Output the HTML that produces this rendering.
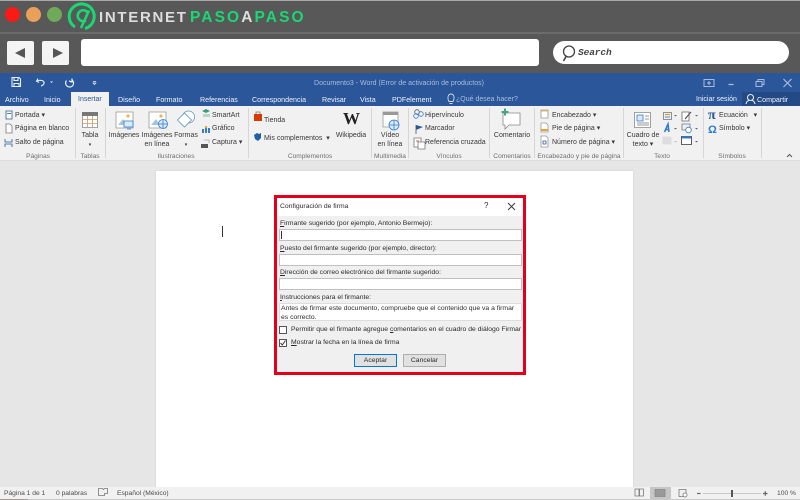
<!DOCTYPE html>
<html lang="es"><head><meta charset="utf-8"><title>Word</title>
<style>
html,body{margin:0;padding:0;background:#fff}
#p{position:relative;width:800px;height:500px;overflow:hidden;font-family:"Liberation Sans",sans-serif;background:#e6e6e6;filter:blur(.3px)}
.a{position:absolute}
.t{position:absolute;white-space:nowrap;font-size:7px;line-height:10px;color:#383838;margin-top:.8px}
.c{transform:translateX(-50%);text-align:center}
.w{color:#eef2f9;font-size:7.100px}
.g{color:#6e6e6e;font-size:6.600px}
.d{color:#2a2a2a;font-size:6.800px}
.s{color:#4c4c4c;font-size:6.700px}
.i{position:absolute;background:#fff;border:1px solid #c0c0c0;box-sizing:border-box}
u{text-decoration:underline}
</style></head><body><div id="p">
<div class="a" style="left:0;top:0;width:800px;height:73px;background:#585858"></div>
<div class="a" style="left:0;top:0;width:800px;height:1px;background:#aaa"></div>
<div class="a" style="left:0;top:32px;width:800px;height:2px;background:#6b6b6b"></div>
<div class="a" style="left:5px;top:7px;width:15px;height:15px;border-radius:50%;background:#fb1a14"></div>
<div class="a" style="left:26px;top:7px;width:15px;height:15px;border-radius:50%;background:#e9a058"></div>
<div class="a" style="left:47px;top:7px;width:15px;height:15px;border-radius:50%;background:#6fa95a"></div>
<svg class="a" style="left:67px;top:1px" width="30" height="30" viewBox="0 0 30 30" fill="none" stroke="#19d873"><path d="M8 26A12.500 12.500 0 1 1 18 27.500" stroke-width="3"/><path d="M14 27L22 9.500M21 12A5.500 5.500 0 1 0 19 19.500" stroke-width="2.600"/></svg>
<div class="t" style="left:99px;top:8px;font-size:15px;font-weight:bold;line-height:18px;color:#dedede;letter-spacing:1.700px">INTERNET</div>
<div class="t" style="left:190px;top:8px;font-size:15.500px;font-weight:bold;line-height:18px;color:#19d873;letter-spacing:2.100px">PASO<span style="color:#dedede">A</span>PASO</div>
<div class="a" style="left:7px;top:41px;width:27px;height:24px;background:#f4f4f4;border-radius:2px"></div>
<div class="a" style="left:42px;top:41px;width:27px;height:24px;background:#f4f4f4;border-radius:2px"></div>
<svg class="a" style="left:0;top:40px" width="80" height="26"><path d="M15 13L25 8V18Z M63 13L53 8V18Z" fill="#555"/></svg>
<div class="a" style="left:81px;top:39px;width:458px;height:27px;background:#fff;border-radius:3px"></div>
<div class="a" style="left:553px;top:41px;width:236px;height:23px;background:#fff;border-radius:12px"></div>
<svg class="a" style="left:560px;top:44px" width="20" height="20" fill="none" stroke="#444" stroke-width="1.300"><circle cx="9" cy="7.500" r="5.500"/><path d="M6 12.500L3.500 17" stroke-width="1.600"/></svg>
<div class="t" style="left:578px;top:46px;font:italic bold 9.500px/12px 'Liberation Mono',monospace;color:#444;letter-spacing:-.1px">Search</div>

<div class="a" style="left:0;top:73px;width:800px;height:33px;background:#2b579a"></div>
<svg class="a" style="left:0;top:73px" width="110" height="18" fill="none" stroke="#e8eef7" stroke-width="1.100"><path d="M12 4.500h7l1.500 1.500v7.500h-8.500z M14 4.500v3h4v-3 M14 13.500v-3h5v3"/><path d="M38 5.500L36.500 8L39 9.500 M37 8c3-1.500 8-.5 7 2.500-.5 1-1 2-3 2.500"/><path d="M50 8.500h3l-1.500 1.500z" fill="#e8eef7" stroke="none"/><path d="M72 5.500L72 9L69 8 M71.500 6.500a4 4 0 1 1-5 1" stroke-width="1.200"/><path d="M93 8.500h3 M93 10h3l-1.500 1.500z" stroke-width=".7"/></svg>
<div class="t c" style="left:399px;top:78px;color:#a7bcdc">Documento3 - Word (Error de activación de productos)</div>
<svg class="a" style="left:700px;top:75px" width="100" height="16" fill="none" stroke="#a7bcdc"><path d="M4 4.500h10v7H4z M7 8h4 M9 6v4" /><path d="M28.500 9.500h5" stroke-width="1.300"/><path d="M56 6.500h6v5h-6z M58 6.500v-2h6v5h-2"/><path d="M83.500 4l8 8M91.500 4l-8 8" stroke-width="1.200"/></svg>
<div class="a" style="left:71px;top:92px;width:38px;height:15px;background:#f1f1f1"></div>
<div class="t w" style="left:5px;top:94px">Archivo</div>
<div class="t w" style="left:44px;top:94px">Inicio</div>
<div class="t" style="left:78px;top:94px;color:#2b579a">Insertar</div>
<div class="t w" style="left:118px;top:94px">Diseño</div>
<div class="t w" style="left:156px;top:94px">Formato</div>
<div class="t w" style="left:200px;top:94px">Referencias</div>
<div class="t w" style="left:252px;top:94px">Correspondencia</div>
<div class="t w" style="left:322px;top:94px">Revisar</div>
<div class="t w" style="left:360px;top:94px">Vista</div>
<div class="t w" style="left:392px;top:94px">PDFelement</div>
<svg class="a" style="left:446px;top:92px" width="10" height="14" fill="none" stroke="#cfdaea" stroke-width=".9"><path d="M3 9.500C1 6 2 2 5 2s4 4 2 7.500z M3.500 11.500h3"/></svg>
<div class="t" style="left:456px;top:94px;color:#a7bcdc;font-size:7px">¿Qué desea hacer?</div>
<div class="t w" style="left:696px;top:94px;font-size:7px">Iniciar sesión</div>
<div class="a" style="left:742px;top:92px;width:58px;height:14px;background:#234a85"></div>
<svg class="a" style="left:745px;top:93px" width="12" height="13" fill="none" stroke="#e8eef7" stroke-width="1.100"><circle cx="5.500" cy="4.500" r="3"/><path d="M1 11c.5-3 2.500-3.500 3-3.500M10 11c-.5-3-2.500-3.500-3-3.500"/></svg>
<div class="t w" style="left:757px;top:94px">Compartir</div>

<div class="a" style="left:0;top:106px;width:800px;height:54px;background:#f1f1f1"></div>
<div class="a" style="left:0;top:160px;width:800px;height:1px;background:#dcdcdc"></div>
<div class="a" style="left:75px;top:108px;width:1px;height:50px;background:#d6d6d6"></div>
<div class="a" style="left:105px;top:108px;width:1px;height:50px;background:#d6d6d6"></div>
<div class="a" style="left:248px;top:108px;width:1px;height:50px;background:#d6d6d6"></div>
<div class="a" style="left:371px;top:108px;width:1px;height:50px;background:#d6d6d6"></div>
<div class="a" style="left:408px;top:108px;width:1px;height:50px;background:#d6d6d6"></div>
<div class="a" style="left:489px;top:108px;width:1px;height:50px;background:#d6d6d6"></div>
<div class="a" style="left:534px;top:108px;width:1px;height:50px;background:#d6d6d6"></div>
<div class="a" style="left:623px;top:108px;width:1px;height:50px;background:#d6d6d6"></div>
<div class="a" style="left:703px;top:108px;width:1px;height:50px;background:#d6d6d6"></div>
<div class="a" style="left:761px;top:108px;width:1px;height:50px;background:#d6d6d6"></div>

<svg class="a" style="left:0;top:106px" width="800" height="54" fill="none" stroke="#777" stroke-width=".8">
<path d="M6 5h6v8H6z" fill="#fff" stroke="#2b579a"/><path d="M7 7.500h4" stroke="#2b579a"/>
<path d="M6 18h4l2 2v7H6z" fill="#fff"/>
<path d="M5 33v3h7v-3M5 41v-3h7v3" stroke="#2b579a"/>
<path d="M82.500 6.500h15v15h-15z" fill="#fff" stroke="#888"/><path d="M82 6h16v4H82z" fill="#777" stroke="none"/><path d="M82 13.500h16M82 17.500h16M87.500 10v11M92.500 10v11" stroke="#c89a6a"/>
<path d="M116 6h17v16h-17z" fill="#fff" stroke="#999"/><path d="M118 19l5-6 4 6z" fill="#a7c4dc" stroke="none"/><circle cx="128" cy="10" r="1.600" fill="#eeb54a" stroke="none"/><path d="M124 15h9v6h-9z M127 23h4" fill="#dceaf6" stroke="#2b7cd3"/>
<path d="M149 6h17v16h-17z" fill="#fff" stroke="#999"/><path d="M151 19l5-6 4 6z" fill="#a7c4dc" stroke="none"/><circle cx="161" cy="10" r="1.600" fill="#eeb54a" stroke="none"/><circle cx="163" cy="18" r="4.500" fill="#dceaf6" stroke="#2b7cd3"/><path d="M158.500 18h9M163 13.500v9" stroke="#2b7cd3"/>
<circle cx="188.500" cy="11" r="6" fill="#fff" stroke="#5f93c8"/><path d="M177.500 14l7-7 7 7-7 7z" fill="#fff" stroke="#5f93c8"/>
<path d="M202 5l4-2 4 2-4 2z" fill="#3a9a7a" stroke="none"/><path d="M203 8h7v3h-7z" fill="#b7d6c8" stroke="none"/>
<path d="M202 27h2v-4h-2zM205 27h2v-7h-2zM208 27h2v-5h-2z" fill="#3a7cc8" stroke="none"/><path d="M205 20h2v2h-2z" fill="#e8a030" stroke="none"/>
<path d="M201 38h7v4h-7z" fill="#555" stroke="none"/><path d="M204 34h5v3" stroke="#aaa"/>
<path d="M254 8h8v7h-8z" fill="#d83b01" stroke="none"/><path d="M256 8v-2h4v2"/>
<path d="M254 29l3-2 2 1 2-1v5l-3 3-3-2z" fill="#1f5fa8" stroke="none"/>
<path d="M383 6h15v15h-15z" fill="#fff" stroke="#999"/><path d="M383 6h15v3h-15z" fill="#999" stroke="none"/><circle cx="394" cy="19" r="5" fill="#dceaf6" stroke="#2b7cd3"/><path d="M389 19h10M394 14v10" stroke="#2b7cd3"/>
<circle cx="417" cy="6" r="2.300" stroke="#555"/><circle cx="416" cy="10" r="2.300" stroke="#3a7cc8"/><circle cx="421" cy="8" r="2.300" stroke="#3a7cc8"/>
<path d="M416 19v9" stroke="#555"/><path d="M416 19l7 2-7 3z" fill="#2b579a" stroke="none"/>
<path d="M414 32h7v9h-7z" fill="#fff"/><path d="M418 36h7v7h-7z" fill="#fff"/><path d="M416 35h3" stroke="#d83b01"/>
<path d="M503 7h17v12h-11l-4 4v-4h-2z" fill="#fff" stroke="#888"/><path d="M501.500 6h7M505 2.500v7" stroke="#3fa886" stroke-width="2"/>
<path d="M541 4h7v8h-7z" fill="#fff" stroke="#999"/><path d="M541 5h7" stroke="#e8a030"/>
<path d="M541 17h5l2 2v7h-7z" fill="#fff" stroke="#999"/><path d="M541 24h7" stroke="#e8a030" stroke-width="2"/>
<path d="M541 30h5l2 2v9h-7z" fill="#fff" stroke="#999"/><path d="M543 35h3v3h-3z" stroke="#2b579a"/>
<path d="M634.500 6.500h16v15h-16z" fill="#fff" stroke="#888"/><path d="M637 9h6v6h-6z" fill="#dceaf6" stroke="#2b7cd3"/><path d="M645 10h4M645 13h4M637 17h12M637 19h12"/>
<path d="M663.500 6.500h8v7h-8z" fill="#eee" stroke="#777"/><path d="M665 8.500h5" stroke="#e8a030" stroke-width="1.200"/><path d="M665 11h5" stroke="#2b7cd3"/>
<path d="M682 6h7v9h-7z" fill="#fff" stroke="#666"/><path d="M685 13l6-7" stroke="#555" stroke-width="1.200"/>
<path d="M664.500 26l3.500-8 1 8M666 23.500h3" stroke="#2b79d0" stroke-width="1.500"/>
<path d="M682 18h8v6h-8z" fill="#eee"/><circle cx="688.500" cy="24" r="2.800" fill="#fff" stroke="#2b79d0"/>
<path d="M663 31h8v7h-8z" fill="#ddd" stroke="#ddd"/>
<path d="M681.500 30.500h10v8h-10z" fill="#fff" stroke="#333"/><path d="M682 31.500h9" stroke="#2b7cd3" stroke-width="2"/>
</svg>
<svg class="a" style="left:0;top:106px" width="800" height="54"><path d="M674 9h3l-1.500 1.500zM695 9h3l-1.500 1.500zM674 22h3l-1.500 1.500zM695 22h3l-1.500 1.500zM695 35h3l-1.500 1.500z" fill="#666"/><path d="M674 35h3l-1.500 1.500z" fill="#bbb"/></svg>
<div class="t" style="left:708px;top:108px;font:bold 14px/14px 'Liberation Serif',serif;color:#2b579a">π</div>
<div class="t" style="left:708px;top:122px;font:bold 11px/14px 'Liberation Sans',sans-serif;color:#2b7cd3">Ω</div>
<div class="t" style="left:343px;top:109px;font:bold 17px/18px 'Liberation Serif',serif;color:#222">W</div>

<div class="t" style="left:15px;top:110px">Portada ▾</div>
<div class="t" style="left:15px;top:123.500px">Página en blanco</div>
<div class="t" style="left:15px;top:137px">Salto de página</div>
<div class="t g c" style="left:38px;top:151px">Páginas</div>
<div class="t c" style="left:90px;top:130px">Tabla</div>
<div class="t c" style="left:90px;top:139px;font-size:5px">▾</div>
<div class="t g c" style="left:90px;top:151px">Tablas</div>
<div class="t c" style="left:124px;top:130px">Imágenes</div>
<div class="t c" style="left:157px;top:130px">Imágenes</div>
<div class="t c" style="left:157px;top:139.500px">en línea</div>
<div class="t c" style="left:186px;top:130px">Formas</div>
<div class="t c" style="left:186px;top:139px;font-size:5px">▾</div>
<div class="t" style="left:212px;top:110px">SmartArt</div>
<div class="t" style="left:212px;top:123.500px">Gráfico</div>
<div class="t" style="left:212px;top:137px">Captura ▾</div>
<div class="t g c" style="left:176px;top:151px">Ilustraciones</div>
<div class="t" style="left:264px;top:115px">Tienda</div>
<div class="t" style="left:264px;top:133px">Mis complementos &nbsp;▾</div>
<div class="t c" style="left:351px;top:130px">Wikipedia</div>
<div class="t g c" style="left:310px;top:151px">Complementos</div>
<div class="t c" style="left:390px;top:130px">Vídeo</div>
<div class="t c" style="left:390px;top:139.500px">en línea</div>
<div class="t g c" style="left:390px;top:151px">Multimedia</div>
<div class="t" style="left:425px;top:110px">Hipervínculo</div>
<div class="t" style="left:425px;top:123.500px">Marcador</div>
<div class="t" style="left:425px;top:137px">Referencia cruzada</div>
<div class="t g c" style="left:449px;top:151px">Vínculos</div>
<div class="t c" style="left:512px;top:130px">Comentario</div>
<div class="t g c" style="left:512px;top:151px">Comentarios</div>
<div class="t" style="left:552px;top:110px">Encabezado ▾</div>
<div class="t" style="left:552px;top:123.500px">Pie de página ▾</div>
<div class="t" style="left:552px;top:137px">Número de página ▾</div>
<div class="t g c" style="left:579px;top:151px">Encabezado y pie de página</div>
<div class="t c" style="left:643px;top:130px">Cuadro de</div>
<div class="t c" style="left:643px;top:139.500px">texto ▾</div>
<div class="t g c" style="left:662px;top:151px">Texto</div>
<div class="t" style="left:719px;top:110px">Ecuación &nbsp;&nbsp;▾</div>
<div class="t" style="left:719px;top:123.500px">Símbolo ▾</div>
<div class="t g c" style="left:732px;top:151px">Símbolos</div>
<svg class="a" style="left:785px;top:153px" width="10" height="6" fill="none" stroke="#555"><path d="M2 4l2.500-2.500L7 4"/></svg>

<div class="a" style="left:156px;top:171px;width:477px;height:316px;background:#fff;box-shadow:0 0 1px #bbb"></div>
<div class="a" style="left:222px;top:226px;width:1px;height:11px;background:#333"></div>

<div class="a" style="left:274px;top:195px;width:252px;height:180px;box-sizing:border-box;border:3px solid #e3001b;background:#f0f0f0"></div>
<div class="a" style="left:277px;top:198px;width:246px;height:18px;background:#fff"></div>
<div class="t d" style="left:280px;top:201px">Configuración de firma</div>
<div class="t d" style="left:484px;top:200.500px;font-size:8px">?</div>
<svg class="a" style="left:507px;top:201.500px" width="10" height="10" fill="none" stroke="#333" stroke-width=".9"><path d="M1 1l7 7M8 1l-7 7"/></svg>
<div class="t d" style="left:280px;top:218px"><u>F</u>irmante sugerido (por ejemplo, Antonio Bermejo):</div>
<div class="i" style="left:279px;top:229px;width:243px;height:12px"></div>
<div class="a" style="left:281px;top:231px;width:1px;height:8px;background:#333"></div>
<div class="t d" style="left:280px;top:243px"><u>P</u>uesto del firmante sugerido (por ejemplo, director):</div>
<div class="i" style="left:279px;top:254px;width:243px;height:12px"></div>
<div class="t d" style="left:280px;top:267.500px"><u>D</u>irección de correo electrónico del firmante sugerido:</div>
<div class="i" style="left:279px;top:278px;width:243px;height:12px"></div>
<div class="t d" style="left:280px;top:292px"><u>I</u>nstrucciones para el firmante:</div>
<div class="i" style="left:279px;top:303px;width:243px;height:18px;border-color:#ddd"></div>
<div class="t d" style="left:281px;top:303px;line-height:9px">Antes de firmar este documento, compruebe que el contenido que va a firmar<br>es correcto.</div>
<div class="i" style="left:279px;top:326px;width:7.500px;height:7.500px;border-color:#555"></div>
<div class="t d" style="left:291px;top:324.500px">Permitir que el firmante agregue <u>c</u>omentarios en el cuadro de diálogo Firmar</div>
<div class="i" style="left:279px;top:339px;width:7.500px;height:7.500px;border-color:#555"></div>
<svg class="a" style="left:279px;top:339px" width="8" height="8" fill="none" stroke="#333"><path d="M1.500 4l1.800 2L6.500 1.500"/></svg>
<div class="t d" style="left:291px;top:337px"><u>M</u>ostrar la fecha en la línea de firma</div>
<div class="a" style="left:354px;top:354px;width:43px;height:13px;box-sizing:border-box;border:1.500px solid #0078d7;background:#e1e1e1"></div>
<div class="t d c" style="left:375.500px;top:355.500px">Aceptar</div>
<div class="a" style="left:403px;top:354px;width:43px;height:13px;box-sizing:border-box;border:1px solid #adadad;background:#e1e1e1"></div>
<div class="t d c" style="left:424.500px;top:355.500px">Cancelar</div>

<div class="a" style="left:0;top:487px;width:800px;height:13px;background:#f1f1f1"></div>
<div class="a" style="left:0;top:499px;width:800px;height:1px;background:#c8c8c8"></div>
<div class="a" style="left:0;top:499px;width:28px;height:1px;background:#a89a90"></div>
<div class="a" style="left:650px;top:487px;width:21px;height:12px;background:#c6c6c6"></div>
<div class="t s" style="left:4px;top:488px">Página 1 de 1</div>
<div class="t s" style="left:56px;top:488px">0 palabras</div>
<div class="t s" style="left:117px;top:488px">Español (México)</div>
<svg class="a" style="left:0;top:486px" width="800" height="14" fill="none" stroke="#777" stroke-width=".8">
<path d="M98.500 2.500h4l1 1 1-1h3v5h-3v2h-6z"/>
<path d="M635 3h4v7h-4zM639.500 3h4v7h-4z"/><path d="M655 3.500h10v7h-10z" fill="#999" stroke="#888"/>
<path d="M679 3.500h7v7h-7z"/><circle cx="685" cy="9" r="2" fill="#fff"/>
<path d="M697 7.500h3.500" stroke="#666" stroke-width="1.200"/><path d="M703 7.500h58" stroke="#bbb"/><path d="M732 4v7" stroke="#555" stroke-width="2"/><path d="M763 7.500h4.500M765.300 5.300v4.500" stroke="#666" stroke-width="1.200"/>
</svg>
<div class="t s" style="left:777px;top:488px">100 %</div>
</div></body></html>
